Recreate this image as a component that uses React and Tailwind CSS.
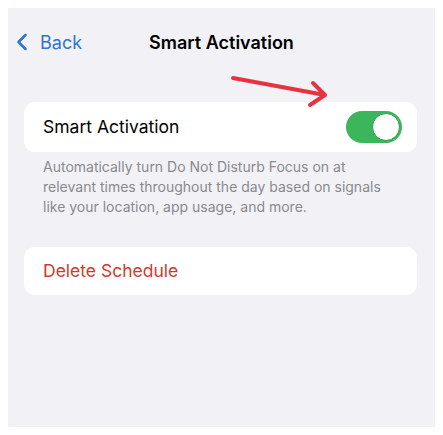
import { ChevronLeft } from 'lucide-react';

function Toggle({ on }) {
  return (
    <div
      className={`w-[56px] h-[32px] rounded-full p-[2px] flex items-center ${
        on ? 'bg-[#3cb65a] justify-end' : 'bg-[#e4e4e8] justify-start'
      }`}
    >
      <div className="w-[28px] h-[28px] rounded-full bg-white border border-[#2f9a4c]" />
    </div>
  );
}

export default function App() {
  return (
    <div className="w-[443px] h-[435px] bg-white p-2 font-['Inter',sans-serif]">
      <div className="relative h-full bg-[#f2f2f6] flex flex-col">
        {/* nav bar */}
        <div className="h-[68px] grid grid-cols-[1fr_auto_1fr] items-center">
          <div className="flex items-center text-[#2f74d0]">
            <ChevronLeft size={28} strokeWidth={2.2} />
            <span className="text-[18px] ml-[4px]">Back</span>
          </div>
          <div className="text-[18px] font-semibold text-black">Smart Activation</div>
          <div />
        </div>

        {/* red pointer arrow */}
        <svg
          className="absolute left-[212px] top-[48px]"
          width="120"
          height="56"
          viewBox="0 0 120 56"
          fill="none"
        >
          <path
            d="M13 22 L105 39 M93 27 L105 39 L90 49"
            stroke="#e8323f"
            strokeWidth="4"
            strokeLinecap="round"
            strokeLinejoin="round"
          />
        </svg>

        <div className="ml-4 mr-[18px] mt-[26px] h-[50px] bg-white rounded-[11px] flex items-center justify-between pl-[19px] pr-[15px]">
          <span className="text-[17.5px] text-black">Smart Activation</span>
          <Toggle on />
        </div>

        <p className="mx-4 pl-[19px] pr-[28px] pt-[5px] text-[14px] leading-[20px] text-[#89898e]">
          Automatically turn Do Not Disturb Focus on at relevant times throughout the day based on signals like your location, app usage, and more.
        </p>

        <div className="ml-4 mr-[18px] mt-[30px] h-[48px] bg-white rounded-[11px] flex items-center pl-[19px]">
          <span className="text-[17.5px] text-[#d2392e]">Delete Schedule</span>
        </div>
      </div>
    </div>
  );
}
